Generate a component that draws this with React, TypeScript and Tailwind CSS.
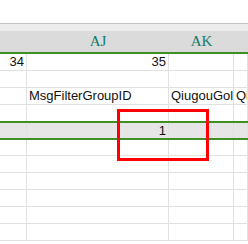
import type { ReactNode } from "react";

const COLS = ["w-[27px]", "w-[142px]", "w-[65px]", "flex-1"];

function Row({ cells, className = "" }: { cells: ReactNode[]; className?: string }) {
  return (
    <div className={`flex h-[17px] border-b border-[#e1e1e1] ${className}`}>
      {COLS.map((w, i) => (
        <div
          key={i}
          className={`${w} shrink-0 overflow-hidden whitespace-nowrap border-r border-[#e1e1e1] px-[2px] text-[13px] leading-[16px] text-[#111]`}
        >
          {cells[i]}
        </div>
      ))}
    </div>
  );
}

const headFont = { fontFamily: '"Liberation Serif", "DejaVu Serif", serif' };

export default function App() {
  return (
    <div className="relative h-[244px] w-[248px] overflow-hidden bg-white" style={{ fontFamily: '"Liberation Sans", Arial, sans-serif' }}>
      <div className="h-[23px]" />
      <div className="h-px bg-[#c4c4c4]" />

      {/* column headers */}
      <div className="flex h-[28px] bg-[linear-gradient(#ececec_0,#ececec_7px,#dbdbdb_7px)]">
        <div className="w-[27px]" />
        <div className="w-[142px] pt-[9px] text-center text-[15px] leading-[16px] text-[#137a6a]" style={headFont}>
          AJ
        </div>
        <div className="w-[65px] pt-[9px] text-center text-[15px] leading-[16px] text-[#137a6a]" style={headFont}>
          AK
        </div>
      </div>
      <div className="h-[2px] bg-[#3f8f22]" />

      <Row cells={[<div className="text-right">34</div>, <div className="text-right">35</div>]} />
      <Row cells={[]} />
      <Row cells={[null, "MsgFilterGroupID", "QiugouGol", "Qi"]} />
      <Row cells={[]} className="!h-[16px] !border-b-0" />

      {/* selected row */}
      <div className="h-[2px] bg-[#3f8f22]" />
      <Row cells={[null, <div className="text-right">1</div>]} className="!h-[15px] !border-b-0 bg-[#e6e6e6] [&>div]:leading-[15px]" />
      <div className="h-[2px] bg-[#3f8f22]" />

      <Row cells={[]} className="!h-[16px]" />
      <Row cells={[]} />
      <Row cells={[]} />
      <Row cells={[]} />
      <Row cells={[]} />
      <Row cells={[]} />

      {/* highlight box */}
      <div className="absolute left-[117px] top-[109px] h-[52px] w-[92px] border-[3px] border-[#ff0000]" />
    </div>
  );
}
